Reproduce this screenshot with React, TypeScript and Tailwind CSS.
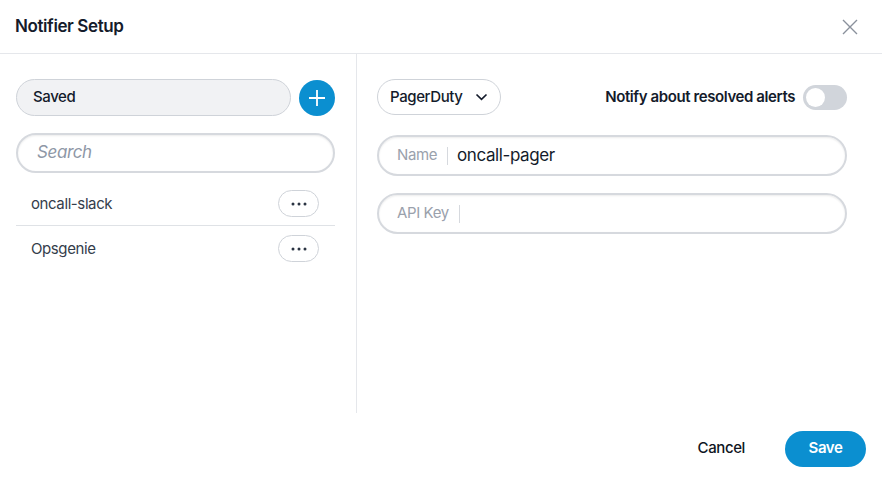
import React from "react";

const Dots = () => (
  <svg width="16" height="4" viewBox="0 0 16 4" fill="#2a3342">
    <circle cx="2" cy="2" r="1.5" />
    <circle cx="8" cy="2" r="1.5" />
    <circle cx="14" cy="2" r="1.5" />
  </svg>
);

export default function App() {
  return (
    <div
      className="w-[882px] h-[478px] bg-white flex flex-col overflow-hidden tracking-[-0.4px]"
      style={{ fontFamily: "Inter, 'Liberation Sans', sans-serif" }}
    >
      {/* Header */}
      <div className="h-[54px] shrink-0 flex items-center justify-between pl-[15px] pr-[24px] border-b border-[#e5e7eb]">
        <div className="text-[17px] font-semibold text-[#141b2b]">Notifier Setup</div>
        <svg width="16" height="16" viewBox="0 0 16 16" stroke="#8a919c" strokeWidth="1.4" fill="none">
          <path d="M1 1 L15 15 M15 1 L1 15" />
        </svg>
      </div>

      {/* Body */}
      <div className="flex h-[359px] shrink-0">
        {/* Left */}
        <div className="w-[357px] shrink-0 border-r border-[#e5e7eb] pl-[16px] pr-[21px] pt-[25px]">
          <div className="flex items-center gap-[8px]">
            <div className="w-[275px] h-[37px] rounded-full bg-[#f1f2f4] border border-[#cfd3d9] flex items-center pl-[16px] text-[15px] text-[#141b2b] font-medium">
              Saved
            </div>
            <div className="w-[36px] h-[36px] rounded-full bg-[#0b8fd0] flex items-center justify-center">
              <svg width="20" height="20" viewBox="0 0 20 20" stroke="white" strokeWidth="1.8" fill="none">
                <path d="M10 2 V18 M2 10 H18" />
              </svg>
            </div>
          </div>
          <div className="mt-[17px] h-[40px] w-[319px] rounded-full border-2 border-[#d6d9de] shadow-[inset_0_1px_2px_rgba(0,0,0,0.08)] flex items-center pl-[19px] text-[17px] italic text-[#8e97a6]">
            Search
          </div>
          <div className="mt-[17px] w-[319px]">
            <div className="h-[36px] flex items-center justify-between pl-[15px] pr-[16px] border-b border-[#dfe2e6]">
              <span className="text-[15px] text-[#343d4b] mt-[-6px]">oncall-slack</span>
              <div className="w-[41px] h-[27px] rounded-full border border-[#cfd3d9] flex items-center justify-center mt-[-8px]">
                <Dots />
              </div>
            </div>
            <div className="h-[45px] flex items-center justify-between pl-[15px] pr-[16px]">
              <span className="text-[15px] text-[#343d4b] mt-[2px]">Opsgenie</span>
              <div className="w-[41px] h-[27px] rounded-full border border-[#cfd3d9] flex items-center justify-center">
                <Dots />
              </div>
            </div>
          </div>
        </div>

        {/* Right */}
        <div className="flex-1 pl-[20px] pr-[35px] pt-[25px]">
          <div className="flex items-center justify-between">
            <div className="h-[36px] w-[124px] rounded-full border border-[#cfd3d9] flex items-center pl-[12px] gap-[12px] text-[15px] font-medium text-[#141b2b]">
              PagerDuty
              <svg width="13" height="8" viewBox="0 0 13 8" stroke="#141b2b" strokeWidth="1.7" fill="none">
                <path d="M1.5 1.5 L6.5 6.3 L11.5 1.5" />
              </svg>
            </div>
            <div className="flex items-center gap-[8px]">
              <span className="text-[15px] font-semibold text-[#141b2b]">Notify about resolved alerts</span>
              <div className="w-[44px] h-[25px] rounded-full bg-[#d1d5db] flex items-center pl-[3px]">
                <div className="w-[19px] h-[19px] rounded-full bg-white" />
              </div>
            </div>
          </div>
          <div className="mt-[20px] h-[41px] rounded-full border-2 border-[#d6d9de] shadow-[inset_0_1px_2px_rgba(0,0,0,0.08)] flex items-center pl-[18px]">
            <span className="text-[15px] text-[#9aa1ac]">Name</span>
            <span className="w-px h-[18px] bg-[#d6d9de] ml-[10px] mr-[9px]" />
            <span className="text-[17px] text-[#141b2b]">oncall-pager</span>
          </div>
          <div className="mt-[17px] h-[41px] rounded-full border-2 border-[#d6d9de] shadow-[inset_0_1px_2px_rgba(0,0,0,0.08)] flex items-center pl-[18px]">
            <span className="text-[15px] text-[#9aa1ac]">API Key</span>
            <span className="w-px h-[18px] bg-[#d6d9de] ml-[10px]" />
          </div>
        </div>
      </div>

      {/* Footer */}
      <div className="flex-1 flex items-center justify-end pr-[16px] gap-[40px] pt-[6px]">
        <span className="text-[15px] font-medium text-[#0f1522]">Cancel</span>
        <div className="w-[81px] h-[36px] rounded-full bg-[#0b8fd0] flex items-center justify-center text-[15px] font-semibold text-white">
          Save
        </div>
      </div>
    </div>
  );
}
